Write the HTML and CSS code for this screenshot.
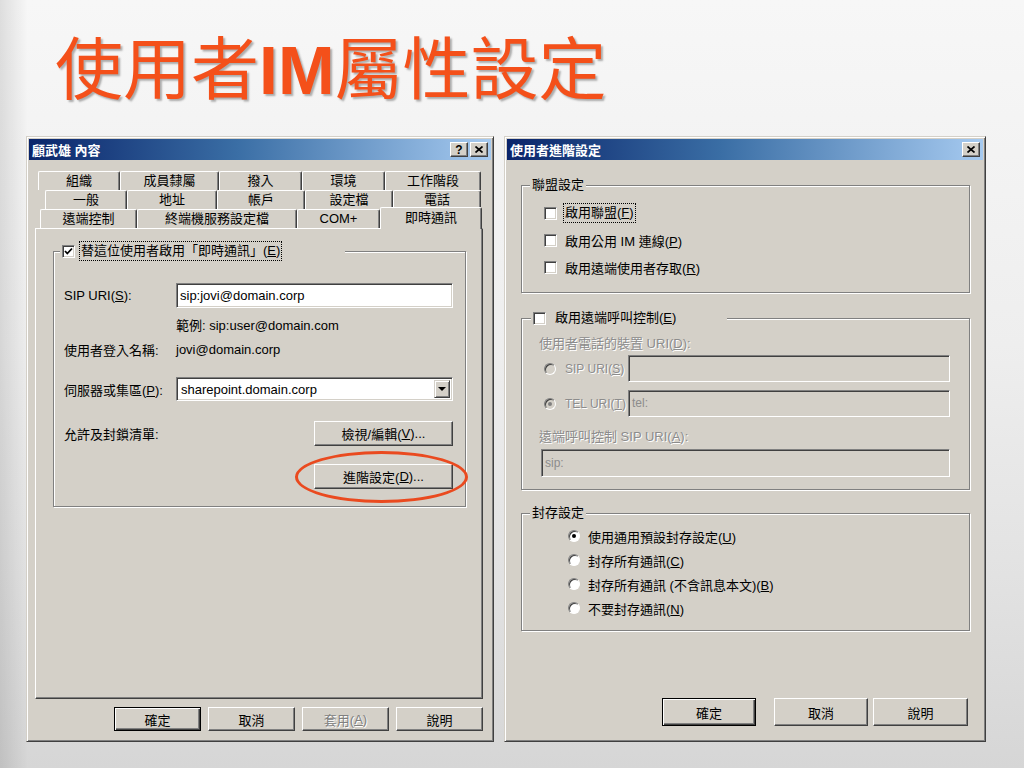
FILE: index.html
```html
<!DOCTYPE html>
<html lang="zh-Hant">
<head>
    <meta charset="UTF-8">
    <title>使用者IM屬性設定</title>
    <link rel="stylesheet" href="styles.css">
</head>
<body>
    <div class="slide">
        <h1 class="slide-title">使用者<span class="title-latin">IM</span>屬性設定</h1>

        <div class="desktop">
            <!-- 左邊：使用者內容 -->
            <div class="window window-props">
                <div class="titlebar">
                    <span class="titlebar-text">顧武雄 內容</span>
                    <span class="titlebar-buttons">
                        <span class="tb-btn tb-help">?</span>
                        <span class="tb-btn">
                            <svg width="8" height="7" viewBox="0 0 8 7"><path d="M0.5 0.5 L7.5 6.5 M7.5 0.5 L0.5 6.5" stroke="#000" stroke-width="1.7" fill="none"/></svg>
                        </span>
                    </span>
                </div>

                <div class="tabs">
                    <div class="tab-row tab-row-1">
                        <div class="tab">組織</div>
                        <div class="tab">成員隸屬</div>
                        <div class="tab">撥入</div>
                        <div class="tab">環境</div>
                        <div class="tab">工作階段</div>
                    </div>
                    <div class="tab-row tab-row-2">
                        <div class="tab">一般</div>
                        <div class="tab">地址</div>
                        <div class="tab">帳戶</div>
                        <div class="tab">設定檔</div>
                        <div class="tab">電話</div>
                    </div>
                    <div class="tab-row tab-row-3">
                        <div class="tab">遠端控制</div>
                        <div class="tab">終端機服務設定檔</div>
                        <div class="tab">COM+</div>
                        <div class="tab tab-active">即時通訊</div>
                    </div>
                </div>

                <div class="tab-panel">
                    <div class="group group-im">
                        <div class="group-caption caption-im">
                            <span class="checkbox">
                                <svg width="9" height="9" viewBox="0 0 9 9"><path d="M1 4 L3.3 6.5 L8 1.5" stroke="#000" stroke-width="1.8" fill="none"/></svg>
                            </span>
                            <span class="focus-label">替這位使用者啟用「即時通訊」(<u>E</u>)</span>
                        </div>

                        <div class="form-row row-sip">
                            <span class="form-label">SIP URI(<u>S</u>):</span>
                            <div class="textbox">sip:jovi@domain.corp</div>
                        </div>
                        <div class="form-row row-example">
                            <span class="form-label"></span>
                            <span>範例: sip:user@domain.com</span>
                        </div>
                        <div class="form-row row-logon">
                            <span class="form-label">使用者登入名稱:</span>
                            <span>jovi@domain.corp</span>
                        </div>
                        <div class="form-row row-server">
                            <span class="form-label">伺服器或集區(<u>P</u>):</span>
                            <div class="select">
                                <span class="select-value">sharepoint.domain.corp</span>
                                <span class="select-arrow"><span class="arrow-down"></span></span>
                            </div>
                        </div>
                        <div class="form-row row-lists">
                            <span class="form-label">允許及封鎖清單:</span>
                            <div class="field-end">
                                <div class="btn btn-wide">檢視/編輯(<u>V</u>)...</div>
                            </div>
                        </div>
                        <div class="form-row row-advanced">
                            <span class="form-label"></span>
                            <div class="field-end">
                                <div class="highlight-wrap">
                                    <div class="btn btn-wide">進階設定(<u>D</u>)...</div>
                                    <span class="highlight-ring"></span>
                                </div>
                            </div>
                        </div>
                    </div>
                </div>

                <div class="dialog-buttons buttons-props">
                    <div class="btn btn-default">確定</div>
                    <div class="btn">取消</div>
                    <div class="btn btn-disabled">套用(<u>A</u>)</div>
                    <div class="btn">說明</div>
                </div>
            </div>

            <!-- 右邊：使用者進階設定 -->
            <div class="window window-advanced">
                <div class="titlebar">
                    <span class="titlebar-text">使用者進階設定</span>
                    <span class="titlebar-buttons">
                        <span class="tb-btn">
                            <svg width="8" height="7" viewBox="0 0 8 7"><path d="M0.5 0.5 L7.5 6.5 M7.5 0.5 L0.5 6.5" stroke="#000" stroke-width="1.7" fill="none"/></svg>
                        </span>
                    </span>
                </div>

                <div class="group group-federation">
                    <div class="group-caption">聯盟設定</div>
                    <div class="check-row">
                        <span class="checkbox"></span>
                        <span class="focus-label">啟用聯盟(<u>F</u>)</span>
                    </div>
                    <div class="check-row">
                        <span class="checkbox"></span>
                        <span>啟用公用 IM 連線(<u>P</u>)</span>
                    </div>
                    <div class="check-row">
                        <span class="checkbox"></span>
                        <span>啟用遠端使用者存取(<u>R</u>)</span>
                    </div>
                </div>

                <div class="group group-remote">
                    <div class="group-caption caption-remote">
                        <span class="checkbox"></span>
                        <span class="caption-text">啟用遠端呼叫控制(<u>E</u>)</span>
                    </div>
                    <div class="disabled-text remote-label">使用者電話的裝置 URI(<u>D</u>):</div>
                    <div class="radio-row remote-first">
                        <span class="radio radio-disabled"></span>
                        <span class="radio-label disabled-text">SIP URI(<u>S</u>)</span>
                        <div class="textbox textbox-disabled textbox-uri"></div>
                    </div>
                    <div class="radio-row remote-second">
                        <span class="radio radio-disabled radio-on"></span>
                        <span class="radio-label disabled-text">TEL URI(<u>T</u>)</span>
                        <div class="textbox textbox-disabled textbox-uri">tel:</div>
                    </div>
                    <div class="disabled-text remote-label remote-sip-label">遠端呼叫控制 SIP URI(<u>A</u>):</div>
                    <div class="textbox textbox-disabled textbox-sip">sip:</div>
                </div>

                <div class="group group-archive">
                    <div class="group-caption">封存設定</div>
                    <div class="archive-row">
                        <span class="radio radio-on"></span>
                        <span>使用通用預設封存設定(<u>U</u>)</span>
                    </div>
                    <div class="archive-row">
                        <span class="radio"></span>
                        <span>封存所有通訊(<u>C</u>)</span>
                    </div>
                    <div class="archive-row">
                        <span class="radio"></span>
                        <span>封存所有通訊 (不含訊息本文)(<u>B</u>)</span>
                    </div>
                    <div class="archive-row">
                        <span class="radio"></span>
                        <span>不要封存通訊(<u>N</u>)</span>
                    </div>
                </div>

                <div class="dialog-buttons buttons-advanced">
                    <div class="btn btn-default">確定</div>
                    <div class="btn btn-cancel">取消</div>
                    <div class="btn btn-help">說明</div>
                </div>
            </div>
        </div>
    </div>
</body>
</html>
```

FILE: styles.css
```css
* {
    margin: 0;
    padding: 0;
    box-sizing: border-box;
}

body {
    width: 1024px;
    height: 768px;
    overflow: hidden;
    font-family: "Liberation Sans", "Noto Sans CJK TC", sans-serif;
    font-size: 13px;
    color: #000;
}

.slide {
    height: 768px;
    padding-top: 31px;
    background:
        linear-gradient(90deg, rgba(0,0,0,0.10) 0, rgba(0,0,0,0) 28px),
        linear-gradient(180deg, #f7f7f7 0%, #eeeeee 45%, #e2e2e2 75%, #d6d6d6 100%);
}

/* 標題 */
.slide-title {
    height: 68px;
    padding-left: 55px;
    font-family: "Noto Sans CJK TC", sans-serif;
    font-size: 68px;
    line-height: 68px;
    font-weight: 400;
    color: #f4501a;
    text-shadow: 2px 2px 2px rgba(0,0,0,0.3);
    white-space: nowrap;
}

.title-latin {
    font-family: "Liberation Sans", sans-serif;
    font-weight: 700;
}

.desktop {
    display: flex;
    align-items: flex-start;
    gap: 10px;
    margin-top: 37px;
    padding-left: 26px;
}

/* 視窗 */
.window {
    height: 606px;
    padding: 2px;
    background: #d4d0c8;
    border: 1px solid;
    border-color: #d4d0c8 #404040 #404040 #d4d0c8;
    box-shadow: inset 1px 1px #fff, inset -1px -1px #808080;
}

.window-props {
    width: 468px;
}

.window-advanced {
    width: 482px;
}

.titlebar {
    height: 21px;
    display: flex;
    align-items: center;
    justify-content: space-between;
    padding: 0 3px 0 3px;
    background: linear-gradient(90deg, #0a246a 0%, #3a6ea5 45%, #a6caf0 100%);
}

.titlebar-text {
    color: #fff;
    font-weight: 700;
    font-size: 13px;
    white-space: nowrap;
}

.titlebar-buttons {
    display: flex;
    gap: 2px;
}

.tb-btn {
    width: 18px;
    height: 15px;
    display: flex;
    align-items: center;
    justify-content: center;
    background: #d4d0c8;
    border: 1px solid;
    border-color: #fff #404040 #404040 #fff;
    box-shadow: inset -1px -1px #808080;
}

.tb-help {
    font-family: "Liberation Sans", sans-serif;
    font-weight: 700;
    font-size: 12px;
    line-height: 12px;
}

/* 索引標籤 */
.tabs {
    margin: 11px 8px 0 6px;
}

.tab-row {
    display: grid;
    height: 19px;
}

.tab-row-1 {
    margin-left: 3px;
    grid-template-columns: 82px 99px 83px 83px 96px;
}

.tab-row-2 {
    margin-left: 10px;
    grid-template-columns: 82px 90px 88px 88px 88px;
}

.tab-row-3 {
    margin-left: 5px;
    grid-template-columns: 97px 160px 83px 102px;
}

.tab {
    height: 19px;
    line-height: 18px;
    text-align: center;
    white-space: nowrap;
    background: #d4d0c8;
    border-top: 1px solid #fff;
    border-left: 1px solid #fff;
    border-right: 1px solid #404040;
    box-shadow: inset -1px 0 #808080;
    border-radius: 2px 2px 0 0;
}

.tab-active {
    position: relative;
    z-index: 1;
    height: 22px;
    margin: -2px 0 -1px 0;
    line-height: 19px;
}

.tab-panel {
    height: 471px;
    margin: 0 8px 0 6px;
    padding: 22px 16px 0 17px;
    border: 1px solid;
    border-color: #fff #404040 #404040 #fff;
    box-shadow: inset -1px -1px #808080;
}

/* 群組方塊 */
.group {
    position: relative;
    border: 1px solid #808080;
    box-shadow: inset 1px 1px #fff, 1px 1px #fff;
}

.group-caption {
    position: absolute;
    top: -10px;
    left: 8px;
    height: 18px;
    line-height: 18px;
    padding: 0 2px;
    background: #d4d0c8;
    white-space: nowrap;
    display: flex;
    align-items: center;
}

.caption-im {
    left: 6px;
    width: 285px;
}

.caption-remote {
    left: 9px;
    width: 196px;
}

.caption-im .checkbox {
    margin-right: 5px;
}

.caption-remote .checkbox {
    margin-right: 9px;
}

.focus-label {
    outline: 1px dotted #000;
    outline-offset: 0;
    padding: 0 1px;
    line-height: 18px;
}

.checkbox {
    flex: none;
    width: 13px;
    height: 13px;
    display: flex;
    align-items: center;
    justify-content: center;
    background: #fff;
    border: 1px solid;
    border-color: #808080 #fff #fff #808080;
    box-shadow: inset 1px 1px #404040, inset -1px -1px #d4d0c8;
}

.radio {
    flex: none;
    width: 12px;
    height: 12px;
    border-radius: 50%;
    background: #fff;
    border: 1px solid;
    border-color: #808080 #fff #fff #808080;
    box-shadow: inset 1px 1px #404040;
    display: flex;
    align-items: center;
    justify-content: center;
}

.radio-on::after {
    content: "";
    width: 4px;
    height: 4px;
    border-radius: 50%;
    background: #000;
}

.radio-disabled {
    background: #d4d0c8;
}

.radio-disabled.radio-on::after {
    background: #808080;
}

u {
    text-decoration: underline;
}

/* 左邊表單 */
.group-im {
    padding: 31px 12px 17px 10px;
}

.form-row {
    display: flex;
    align-items: center;
    white-space: nowrap;
}

.form-label {
    flex: none;
    width: 112px;
}

.row-sip {
    height: 25px;
}

.row-example {
    height: 16px;
    margin-top: 8px;
}

.row-logon {
    height: 16px;
    margin-top: 9px;
}

.row-server {
    height: 24px;
    margin-top: 20px;
}

.row-lists {
    height: 25px;
    margin-top: 20px;
}

.row-advanced {
    height: 25px;
    margin-top: 18px;
}

.field-end {
    width: 278px;
    display: flex;
    justify-content: flex-end;
}

.textbox {
    width: 277px;
    height: 25px;
    line-height: 23px;
    padding-left: 3px;
    background: #fff;
    border: 1px solid;
    border-color: #808080 #fff #fff #808080;
    box-shadow: inset 1px 1px #404040, inset -1px -1px #d4d0c8;
    white-space: nowrap;
    overflow: hidden;
}

.select {
    width: 277px;
    height: 24px;
    display: flex;
    align-items: center;
    padding: 2px;
    background: #fff;
    border: 1px solid;
    border-color: #808080 #fff #fff #808080;
    box-shadow: inset 1px 1px #404040, inset -1px -1px #d4d0c8;
}

.select-value {
    flex: 1;
    padding-left: 2px;
}

.select-arrow {
    width: 16px;
    height: 18px;
    display: flex;
    align-items: center;
    justify-content: center;
    background: #d4d0c8;
    border: 1px solid;
    border-color: #d4d0c8 #404040 #404040 #d4d0c8;
    box-shadow: inset 1px 1px #fff, inset -1px -1px #808080;
}

.arrow-down {
    width: 0;
    height: 0;
    border-left: 4px solid transparent;
    border-right: 4px solid transparent;
    border-top: 4px solid #000;
}

.btn {
    display: flex;
    align-items: center;
    justify-content: center;
    white-space: nowrap;
    background: #d4d0c8;
    border: 1px solid;
    border-color: #fff #404040 #404040 #fff;
    box-shadow: inset -1px -1px #808080;
}

.btn-default {
    border-color: #000;
    box-shadow: inset 1px 1px #fff, inset -1px -1px #404040, inset -2px -2px #808080;
}

.btn-disabled {
    color: #808080;
    text-shadow: 1px 1px 0 #fff;
}

.btn-wide {
    width: 139px;
    height: 25px;
}

.highlight-wrap {
    position: relative;
}

.highlight-ring {
    position: absolute;
    left: -19px;
    top: -13px;
    width: 173px;
    height: 52px;
    border: 3px solid #ea4a1f;
    border-radius: 50%;
}

.dialog-buttons {
    display: flex;
    justify-content: flex-end;
}

.buttons-props {
    gap: 7px;
    margin-top: 8px;
    padding-right: 8px;
}

.buttons-props .btn {
    width: 87px;
    height: 24px;
}

/* 右邊：進階設定 */
.group-federation,
.group-remote,
.group-archive {
    margin-left: 14px;
    margin-right: 13px;
}

.group-federation {
    margin-top: 25px;
    padding: 18px 0 16px 22px;
    display: flex;
    flex-direction: column;
    gap: 9px;
}

.check-row {
    height: 18px;
    display: flex;
    align-items: center;
    gap: 8px;
    white-space: nowrap;
}

.check-row .focus-label {
    margin-left: -1px;
}

.group-remote {
    margin-top: 25px;
    padding: 16px 0 12px 0;
}

.disabled-text {
    color: #8c8c8c;
    text-shadow: 1px 1px 0 #fff;
}

.remote-label {
    height: 18px;
    line-height: 18px;
    padding-left: 17px;
    white-space: nowrap;
}

.remote-sip-label {
    margin-top: 11px;
}

.radio-row {
    height: 27px;
    display: flex;
    align-items: center;
    padding-left: 22px;
}

.remote-first {
    margin-top: 2px;
}

.remote-second {
    margin-top: 8px;
}

.radio-label {
    flex: none;
    width: 63px;
    margin-left: 9px;
    font-size: 12px;
    white-space: nowrap;
}

.textbox-disabled {
    background: #d4d0c8;
    color: #8c8c8c;
    font-size: 12px;
}

.textbox-uri {
    width: 322px;
    height: 27px;
    line-height: 25px;
}

.textbox-sip {
    width: 409px;
    height: 28px;
    line-height: 26px;
    margin: 3px 0 0 19px;
}

.group-archive {
    margin-top: 23px;
    padding: 13px 0 13px 46px;
    display: flex;
    flex-direction: column;
    gap: 6px;
}

.archive-row {
    height: 18px;
    display: flex;
    align-items: center;
    gap: 8px;
    white-space: nowrap;
}

.buttons-advanced {
    margin-top: 67px;
    padding-right: 15px;
}

.buttons-advanced .btn {
    width: 94px;
    height: 28px;
}

.buttons-advanced .btn-cancel {
    margin-left: 18px;
}

.buttons-advanced .btn-help {
    width: 95px;
    margin-left: 5px;
}
```
